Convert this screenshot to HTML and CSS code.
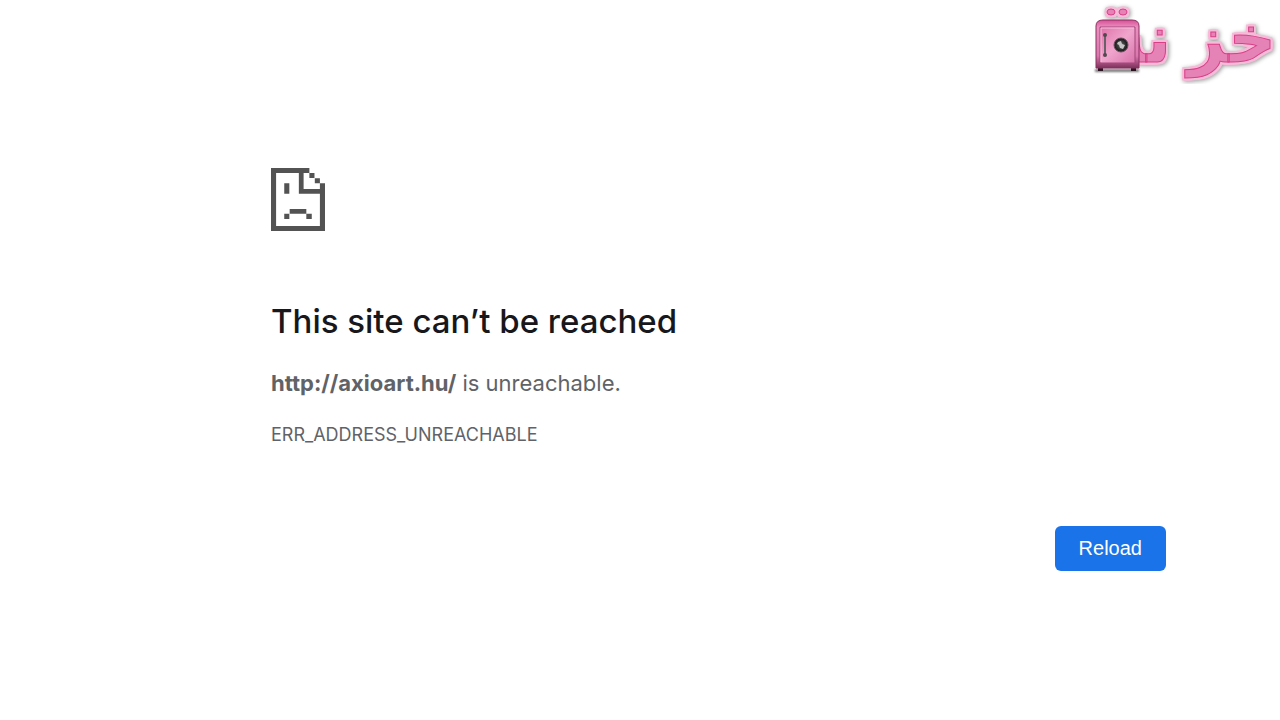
FILE: index.html
```html
<!DOCTYPE html>
<html lang="en">
<head>
<meta charset="utf-8">
<meta name="viewport" content="width=device-width, initial-scale=1">
<title>axioart.hu</title>
<link rel="stylesheet" href="styles.css">
</head>
<body>
<svg class="brand" viewBox="0 0 200 84" role="img" aria-label="خزنة">
  <defs>
    <linearGradient id="steel" x1="0" y1="0" x2="0" y2="1">
      <stop offset="0" stop-color="#d84f96"/><stop offset=".15" stop-color="#ea8fc0"/><stop offset=".75" stop-color="#d978ad"/><stop offset="1" stop-color="#7d315b"/>
    </linearGradient>
    <linearGradient id="door" x1="0" y1="0" x2="1" y2="1">
      <stop offset="0" stop-color="#df70a8"/><stop offset=".5" stop-color="#f0a5cd"/><stop offset="1" stop-color="#d773aa"/>
    </linearGradient>
    <radialGradient id="dial"><stop offset="0" stop-color="#999"/><stop offset=".4" stop-color="#444"/><stop offset="1" stop-color="#151515"/></radialGradient>
  </defs>
  <g class="brand-text">
    <text x="196" y="62" direction="rtl">خز</text>
    <text x="91" y="62" direction="rtl">نة</text>
    <ellipse cx="31" cy="12" rx="4" ry="3"/><ellipse cx="43" cy="12" rx="4" ry="3"/>
  </g>
  <path class="safe-shadow" d="M15 69h44v3H15z"/>
  <path fill="#24151e" d="M18 67h5v4h-5zM51 67h5v4h-5z"/>
  <path fill="url(#steel)" stroke="#8c2f61" d="M16 26q0-6 7-6h29q7 0 7 6v42H16z"/>
  <path fill="url(#door)" stroke="#a34778" d="M20 27h35v36H20z"/>
  <path fill="none" stroke="#f6c0dc" d="M21 62V28h33"/>
  <path fill="none" stroke="#69616a" stroke-width="2" d="M25 35v20"/>
  <circle cx="25" cy="35" r="2" fill="#55474f"/><circle cx="25" cy="55" r="2" fill="#55474f"/>
  <circle cx="41" cy="45" r="7" fill="url(#dial)" stroke="#6f4e61"/>
  <path fill="#c5c5c5" d="m38 42 3-1 1 3 3 1-2 4-3-1-1-3-2-1z"/>
</svg>
<main class="error">
  <svg class="sad-page" viewBox="36 24 159 189" preserveAspectRatio="none" aria-hidden="true">
    <path fill="#535353" d="M36 24h113v15h-17v48h48V70h15v143H36zM51 39v159h129v-97h-62V39zM149 39h15v15h-15zM165 55h15v15h-15zM75 70h15v31H75zM91 147h49v14H91zM75 161h15v16H75zM140 161h16v16h-16z" fill-rule="evenodd"/>
  </svg>
  <h1 class="title">This site can’t be reached</h1>
  <p class="summary"><strong>http://axioart.hu/</strong> is unreachable.</p>
  <p class="code">ERR_ADDRESS_UNREACHABLE</p>
  <div class="actions"><button class="reload" type="button">Reload</button></div>
</main>
</body>
</html>
```
FILE: styles.css
```css
body {
  margin: 0;
  background: #fff;
  color: #5f6368;
  font-family: Inter, "Liberation Sans", sans-serif;
}
.brand {
  position: absolute;
  top: 0;
  right: 0;
  width: 200px;
  height: 84px;
}
.brand-text {
  font-family: "DejaVu Sans", sans-serif;
  font-weight: 700;
  font-size: 66px;
  fill: #e582b6;
  stroke: #d93f87;
  stroke-width: 1px;
  filter: drop-shadow(2px 0 0 #f5bbd8) drop-shadow(-2px 0 0 #f5bbd8)
    drop-shadow(0 2px 0 #f5bbd8) drop-shadow(0 -2px 0 #f5bbd8)
    drop-shadow(1px 1px 2px #999);
}
.safe-shadow {
  fill: #777;
  filter: blur(1px);
}
.error {
  max-width: 895px;
  margin-left: 271px;
  margin-right: 114px;
  padding-top: 168px;
}
.sad-page {
  display: block;
  width: 54px;
  height: 63px;
}
.title {
  margin: 68px 0 0;
  color: #17171c;
  font-size: 33px;
  font-weight: 500;
  line-height: 44px;
}
.summary {
  margin: 24px 0 0;
  font-size: 22px;
  line-height: 32px;
}
.code {
  margin: 25px 0 0;
  font-size: 18px;
  line-height: 22px;
}
.actions {
  display: flex;
  justify-content: flex-end;
  margin-top: 80px;
}
.reload {
  border: 0;
  border-radius: 6px;
  padding: 11px 24px;
  background: #1a73e8;
  color: #fff;
  font-family: "Liberation Sans", Arial, sans-serif;
  font-size: 20px;
  line-height: 23px;
}
```
